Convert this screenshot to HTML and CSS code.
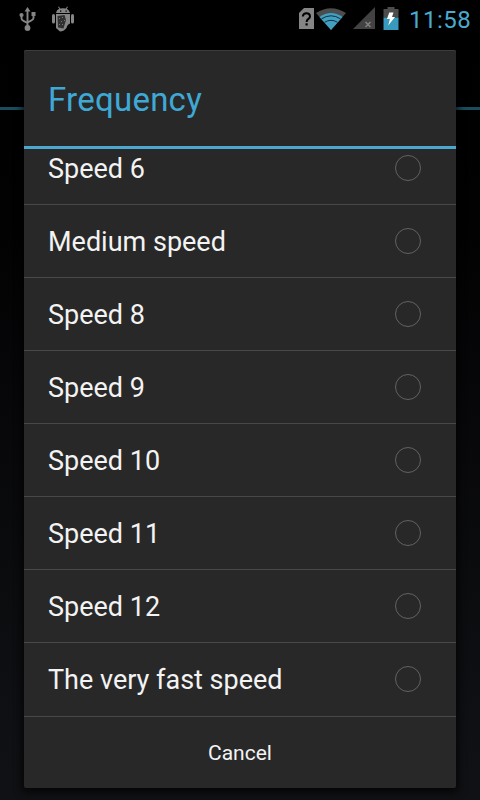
FILE: index.html
```html
<!DOCTYPE html>
<html lang="en">
<head>
<meta charset="utf-8">
<title>Frequency</title>
<link rel="stylesheet" href="styles.css">
</head>
<body>
<div class="screen">
  <header class="status">
    <svg class="notifications" width="90" height="38" viewBox="0 0 90 38">
      <g fill="none" stroke="#858585" stroke-width="1.900">
        <path d="M27.500 10v18M21.500 16v2.500q0 1.500 2 2.300l4 2.200M33.500 15v3q0 1.500-2 2.300l-4 2.200"/>
      </g>
      <g fill="#858585">
        <path d="M27.500 7l3 4.500h-6zM31.500 12h4v4h-4z"/>
        <circle cx="21.500" cy="15" r="2.100"/><circle cx="27.500" cy="28" r="2.900"/>
      </g>
      <g fill="#858585">
        <path d="M56 13q.5-3.300 3.300-4.200L58 7l.8-.5 1.500 2q2.700-.7 5.400 0l1.500-2L68 7l-1.300 1.800Q69.500 10 70 13z"/>
        <rect x="52" y="14" width="3" height="9.500" rx="1.500"/><rect x="71" y="14" width="3" height="9.500" rx="1.500"/>
        <path d="M56 14h14v9.500q-3 1-3.500 4.500-3 3.500-6.500 3.500L56 28z"/>
      </g>
      <path d="M57.500 16l7-1 1.500 5-2.500 8.500-5.500-1z" fill="#303030"/>
      <path d="M59 18h1v1h-1zM62 17h1v1h-1zM61 21h1v1h-1zM64 20h1v1h-1zM62 24h1v1h-1zM59 24h1v1h-1z" fill="#777"/>
      <path d="M60 10.500h1.300v1.300H60zM65.500 10.500h1.300v1.300h-1.300z" fill="#000"/>
    </svg>
    <div class="system">
      <svg width="106" height="38" viewBox="296 0 106 38">
        <path d="M304 8h10v21h-15V13z" fill="#858585"/>
        <path d="M302.800 16.500q.4-3.200 3.700-3.200t3.500 2.900q0 1.500-1.600 2.700-1.800 1.300-1.800 3" fill="none" stroke="#000" stroke-width="2"/>
        <rect x="305.500" y="23.300" width="2.200" height="2.200"/>
        <path d="M316 13Q331 3.500 346 13L331 30z" fill="#4c4c4c"/>
        <path d="M319.500 17Q331 9 342.500 17L331 30z" fill="#419fc1"/>
        <path d="M321.500 18.800Q331 12.800 340.500 18.800M324.500 22.300Q331 18.300 337.500 22.300" fill="none" stroke="#12303c" stroke-width="1"/>
        <path d="M375 7v22h-22z" fill="#424242"/>
        <path d="M365.500 22l5 5m0-5l-5 5" stroke="#858585" stroke-width="1.400"/>
        <path d="M383.500 9h4V7h7v2h4v8.500h-15z" fill="#4c4c4c"/>
        <path d="M383.500 17.500h15V30h-15z" fill="#389abd"/>
        <path d="M389.300 12.500h4.200l-1.500 4.500h3l-6.800 8.500 1.700-6.500h-3z" fill="#fff"/>
      </svg>
      <span class="clock">11:58</span>
    </div>
  </header>
  <main class="backdrop">
    <section class="dialog">
      <h1 class="title">Frequency</h1>
      <div class="list">
        <ul class="options">
          <li class="option"><span>Speed 6</span><i class="radio"></i></li>
          <li class="option"><span>Medium speed</span><i class="radio"></i></li>
          <li class="option"><span>Speed 8</span><i class="radio"></i></li>
          <li class="option"><span>Speed 9</span><i class="radio"></i></li>
          <li class="option"><span>Speed 10</span><i class="radio"></i></li>
          <li class="option"><span>Speed 11</span><i class="radio"></i></li>
          <li class="option"><span>Speed 12</span><i class="radio"></i></li>
          <li class="option"><span>The very fast speed</span><i class="radio"></i></li>
        </ul>
      </div>
      <button class="cancel">Cancel</button>
    </section>
  </main>
</div>
</body>
</html>
```
FILE: styles.css
```css
* { box-sizing: border-box; }
body { margin: 0; background: #000; font-family: Roboto, sans-serif; }
.screen { width: 480px; height: 800px; overflow: hidden; background: #000; }
.status { height: 38px; display: flex; justify-content: space-between; }
.status svg { display: block; }
.system { display: flex; }
.clock { width: 78px; padding-left: 7px; font-size: 24px; letter-spacing: .5px; line-height: 40px; color: #4aa9cf; }
.backdrop {
  height: 762px;
  padding: 12px 24px;
  background:
    linear-gradient(#1c4d5e, #1c4d5e) 0 69px / 100% 3px no-repeat,
    linear-gradient(#000 0, #020203 25%, #0f1013 90%, #101114 100%);
}
.dialog {
  height: 738px;
  display: flex;
  flex-direction: column;
  background: #282828;
  border-radius: 2px;
  box-shadow: 0 2px 8px 2px rgba(0, 0, 0, .75), inset 0 1px 0 #3c3c3c;
}
.title {
  height: 99px;
  margin: 0;
  padding-left: 24px;
  border-bottom: 3px solid #4ba8d0;
  font-size: 33px;
  font-weight: 400;
  letter-spacing: .25px;
  line-height: 99px;
  color: #3fa9d6;
}
.list { height: 567px; overflow: hidden; }
.options { margin: -17px 0 0; padding: 0; list-style: none; }
.option {
  height: 73px;
  padding: 0 35px 0 24px;
  display: flex;
  align-items: center;
  justify-content: space-between;
  border-bottom: 1px solid #484848;
  font-size: 27px;
  line-height: 32px;
  color: #f3f3f3;
}
.option span { padding-top: 2px; }
.option:last-child { border-bottom-color: transparent; }
.radio { width: 26px; height: 26px; border: 1px solid #626262; border-radius: 50%; }
.cancel {
  height: 72px;
  padding: 0;
  border: 0;
  border-top: 1px solid #484848;
  background: none;
  font: 21px Roboto, sans-serif;
  color: #f3f3f3;
}
```
